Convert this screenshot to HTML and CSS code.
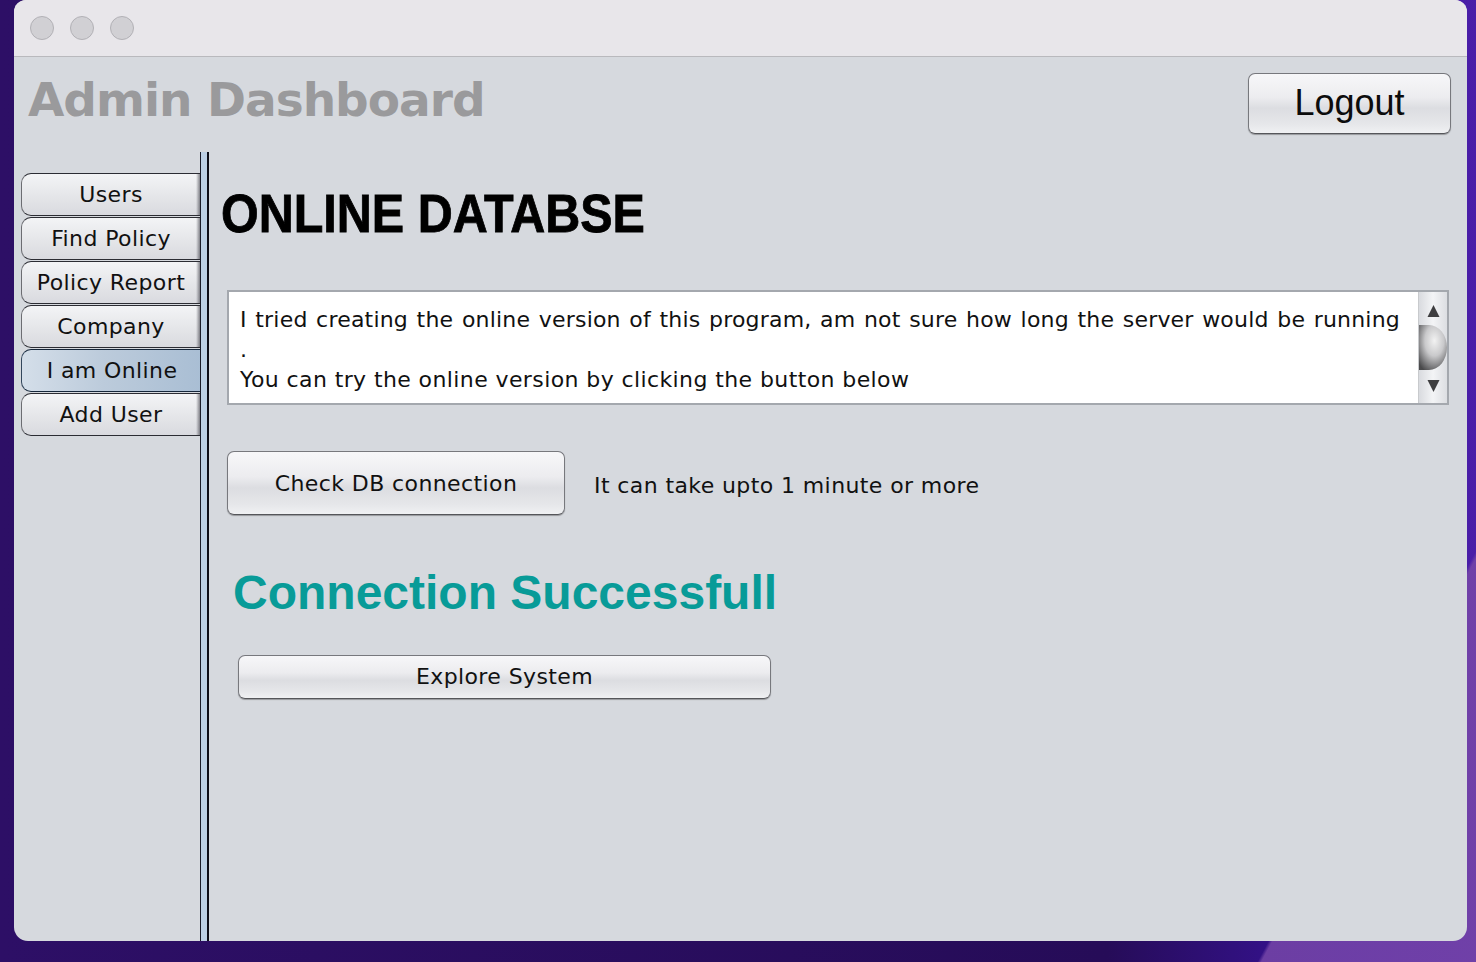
FILE: index.html
```html
<!DOCTYPE html>
<html>
<head>
<meta charset="utf-8">
<title>Admin Dashboard</title>
<link rel="stylesheet" href="styles.css">
</head>
<body>
<div class="window">
  <div class="titlebar">
    <span class="light"></span><span class="light"></span><span class="light"></span>
  </div>
  <div class="main">
    <div class="header">
      <div class="app-title">Admin Dashboard</div>
      <button class="btn logout">Logout</button>
    </div>
    <div class="body">
      <div class="sidebar">
        <div class="tab">Users</div>
        <div class="tab">Find Policy</div>
        <div class="tab">Policy Report</div>
        <div class="tab">Company</div>
        <div class="tab selected">I am Online</div>
        <div class="tab">Add User</div>
      </div>
      <div class="divider"></div>
      <div class="content">
        <h1 class="heading"><span>ONLINE DATABSE</span></h1>
        <div class="textarea">
          <div class="text">
            <div class="line justify">I tried creating the online version of this program, am not sure how long the server would be running</div>
            <div class="line">.</div>
            <div class="line">You can try the online version by clicking the button below</div>
          </div>
          <div class="scrollbar">
            <svg width="28" height="111" viewBox="0 0 28 111">
              <defs>
                <radialGradient id="thumb" cx="0.55" cy="0.35" r="0.75">
                  <stop offset="0" stop-color="#f2f2f2"/>
                  <stop offset="0.45" stop-color="#c9c9cb"/>
                  <stop offset="1" stop-color="#4a4a4c"/>
                </radialGradient>
              </defs>
              <path d="M14.5 13 L20.5 25 L8.5 25 Z" fill="#3e3e40"/>
              <path d="M0 33 L10 33 A18 22.5 0 0 1 10 78 L0 78 Z" fill="url(#thumb)"/>
              <path d="M8.5 88 L20.5 88 L14.5 100 Z" fill="#3e3e40"/>
            </svg>
          </div>
        </div>
        <div class="check-row">
          <button class="btn check">Check DB connection</button>
          <span class="note">It can take upto 1 minute or more</span>
        </div>
        <div class="success">Connection Successfull</div>
        <button class="btn explore">Explore System</button>
      </div>
    </div>
  </div>
</div>
</body>
</html>
```

FILE: styles.css
```css
html, body {
  margin: 0;
  padding: 0;
}
body {
  width: 1476px;
  height: 962px;
  overflow: hidden;
  background:
    linear-gradient(118deg, transparent 89%, rgba(118, 70, 168, 0.85) 89.2%),
    linear-gradient(to right, #2d0f66 0%, #260c58 75%, #3a14a0 92%, #4a1ea8 100%);
  font-family: "DejaVu Sans", Verdana, sans-serif;
}
.window {
  margin-left: 14px;
  width: 1453px;
  height: 941px;
  border-radius: 12px 12px 14px 14px;
  overflow: hidden;
  background: #d6d9de;
  display: flex;
  flex-direction: column;
}
.titlebar {
  height: 56px;
  flex: none;
  background: #e8e6ea;
  border-bottom: 1px solid #b9b9bd;
  display: flex;
  align-items: center;
  gap: 16px;
  padding-left: 16px;
  box-sizing: content-box;
}
.light {
  width: 22px;
  height: 22px;
  border-radius: 50%;
  background: #d1d0d4;
  border: 1px solid #b2b1b6;
}
.main {
  flex: 1;
  display: flex;
  flex-direction: column;
}
.header {
  height: 95px;
  flex: none;
  display: flex;
  justify-content: space-between;
  align-items: flex-start;
  padding: 16px 16px 0 14px;
  box-sizing: border-box;
}
.app-title {
  margin-top: 3px;
  font-family: "DejaVu Sans", Verdana, sans-serif;
  font-weight: bold;
  font-size: 47px;
  line-height: 1;
  letter-spacing: -1px;
  color: #9a9a9c;
}
.btn {
  display: flex;
  align-items: center;
  justify-content: center;
  padding: 0;
  border: 1px solid #77787d;
  border-bottom-color: #55565a;
  border-radius: 7px;
  background: linear-gradient(to bottom, #f7f7f9 0%, #ececef 40%, #dcdde1 58%, #e6e7ea 85%, #f0f1f3 100%);
  box-shadow: 0 1px 1px rgba(0, 0, 0, 0.3);
  color: #111;
  font-family: "DejaVu Sans", Verdana, sans-serif;
  font-size: 22px;
  letter-spacing: 0.4px;
  box-sizing: border-box;
}
.logout {
  width: 203px;
  height: 61px;
  font-family: "Liberation Sans", Arial, sans-serif;
  font-size: 36px;
  letter-spacing: 0;
  color: #0c0c0c;
  padding-bottom: 2px;
}
.body {
  flex: 1;
  display: flex;
}
.sidebar {
  width: 186px;
  flex: none;
  padding: 21px 0 0 7px;
  box-sizing: border-box;
}
.tab {
  width: 179px;
  height: 43px;
  margin-bottom: 1px;
  box-sizing: border-box;
  border: 1px solid #2b2c33;
  border-left-color: #6c6d72;
  border-right: none;
  border-radius: 10px 0 0 10px;
  background:
    linear-gradient(to right, transparent calc(100% - 4px), rgba(40, 40, 50, 0.55) 100%),
    linear-gradient(to bottom, #f3f4f6 0%, #e6e7ea 50%, #d9dadf 100%);
  display: flex;
  align-items: center;
  justify-content: center;
  font-size: 22px;
  letter-spacing: 0.4px;
  color: #111;
  padding-bottom: 1px;
}
.tab.selected {
  width: 181px;
  border-color: #15263a;
  border-left-color: #33475c;
  background: linear-gradient(to right, #d4dee9 0%, #bccbdb 45%, #a9bed4 100%);
}
.divider {
  width: 9px;
  flex: none;
  background: linear-gradient(to right, #1b1b28 0 1px, #bdd0e5 1px 7px, #0e0e18 7px 9px);
}
.content {
  flex: 1;
  padding-left: 18px;
  display: flex;
  flex-direction: column;
  align-items: flex-start;
}
.heading {
  margin: 35px 0 0 -6px;
  font-family: "Liberation Sans", Arial, Helvetica, sans-serif;
  font-weight: bold;
  font-size: 53px;
  line-height: 53px;
  height: 53px;
  color: #000;
}
.heading span {
  display: inline-block;
  transform: scaleX(0.915);
  transform-origin: left center;
  white-space: nowrap;
  -webkit-text-stroke: 0.8px #000;
}
.textarea {
  margin-top: 50px;
  width: 1222px;
  height: 115px;
  box-sizing: border-box;
  border: 2px solid #a4a8ae;
  background: #fff;
  display: flex;
}
.text {
  flex: 1;
  padding: 13px 18px 0 11px;
  font-size: 22px;
  letter-spacing: 0.4px;
  line-height: 30px;
  color: #111;
}
.line {
  white-space: nowrap;
}
.line.justify {
  white-space: normal;
  text-align: justify;
  text-align-last: justify;
  letter-spacing: 0.2px;
}
.scrollbar {
  width: 29px;
  flex: none;
  border-left: 1px solid #c8cacd;
  box-sizing: border-box;
  background: linear-gradient(to right, #d9dbdf 0%, #f3f4f6 50%, #dcdee2 100%);
  display: flex;
}
.scrollbar svg {
  display: block;
}
.check-row {
  margin-top: 46px;
  display: flex;
  align-items: center;
  gap: 29px;
}
.check {
  width: 338px;
  height: 64px;
}
.note {
  font-size: 22px;
  letter-spacing: 0.4px;
  color: #111;
  padding-top: 4px;
}
.success {
  margin: 54px 0 0 6px;
  font-family: "Liberation Sans", Arial, Helvetica, sans-serif;
  font-weight: bold;
  font-size: 48px;
  line-height: 48px;
  color: #089b98;
}
.explore {
  margin: 38px 0 0 11px;
  width: 533px;
  height: 44px;
  padding-bottom: 1px;
}
```
